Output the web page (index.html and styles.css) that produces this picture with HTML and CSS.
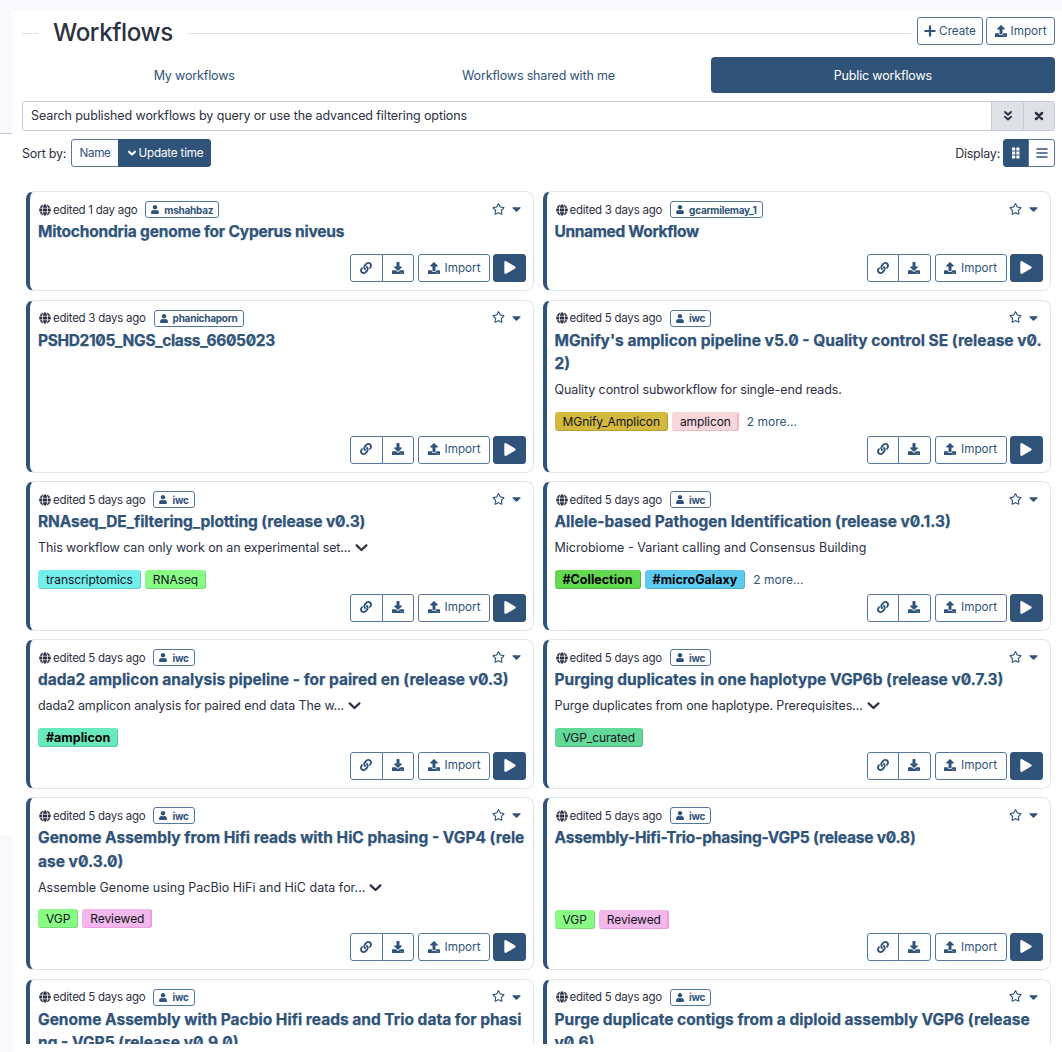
FILE: index.html
```html
<!DOCTYPE html>
<html lang="en">
<head>
<meta charset="utf-8">
<title>Workflows</title>
<link rel="stylesheet" href="styles.css">
</head>
<body>
<svg class="sprite" aria-hidden="true">
<symbol id="globe" viewBox="0 0 496 512"><path d="M336.500 160C322 70.700 287.800 8 248 8s-74 62.700-88.500 152h177zM152 256c0 22.200 1.200 43.500 3.300 64h185.300c2.100-20.500 3.300-41.800 3.300-64s-1.200-43.500-3.300-64H155.300c-2.100 20.500-3.300 41.800-3.300 64zm324.700-96c-28.600-67.900-86.500-120.400-158-141.600 24.400 33.800 41.200 84.700 50 141.600h108zM177.200 18.400C105.800 39.600 47.800 92.100 19.300 160h108c8.700-56.900 25.500-107.800 49.900-141.600zM487.400 192H372.700c2.100 21 3.300 42.500 3.300 64s-1.200 43-3.300 64h114.600c5.500-20.500 8.600-41.800 8.600-64s-3.100-43.500-8.500-64zM120 256c0-21.500 1.200-43 3.300-64H8.600C3.200 212.500 0 233.800 0 256s3.200 43.500 8.600 64h114.600c-2-21-3.200-42.500-3.200-64zm39.500 96c14.500 89.300 48.700 152 88.500 152s74-62.700 88.500-152h-177zm159.300 141.600c71.400-21.200 129.400-73.700 158-141.600h-108c-8.800 56.900-25.600 107.800-50 141.600zM19.300 352c28.600 67.900 86.500 120.400 158 141.600-24.400-33.800-41.200-84.700-50-141.600h-108z"/></symbol>
<symbol id="user" viewBox="0 0 448 512"><path d="M224 256c70.700 0 128-57.300 128-128S294.700 0 224 0 96 57.300 96 128s57.300 128 128 128zm89.600 32h-16.700c-22.200 10.200-46.900 16-72.900 16s-50.600-5.800-72.900-16h-16.700C60.200 288 0 348.200 0 422.400V464c0 26.500 21.500 48 48 48h352c26.500 0 48-21.500 48-48v-41.600c0-74.200-60.200-134.400-134.400-134.400z"/></symbol>
<symbol id="star" viewBox="0 0 576 512"><path d="M528.100 171.500L382 150.200 316.700 17.800c-11.700-23.600-45.600-23.900-57.400 0L194 150.200 47.900 171.500c-26.200 3.800-36.700 36.100-17.700 54.600l105.700 103-25 145.500c-4.500 26.300 23.200 46 46.400 33.700L288 439.600l130.700 68.700c23.200 12.200 50.900-7.400 46.400-33.700l-25-145.500 105.700-103c19-18.500 8.500-50.800-17.700-54.600zM388.600 312.300l23.700 138.400L288 385.400l-124.300 65.300 23.700-138.400-100.600-98 139-20.200 62.200-126 62.200 126 139 20.200-100.600 98z"/></symbol>
<symbol id="caret" viewBox="0 0 320 512"><path d="M31.300 192h257.300c17.800 0 26.700 21.500 14.100 34.100L174.100 354.800c-7.800 7.800-20.500 7.800-28.300 0L17.200 226.100C4.600 213.500 13.500 192 31.300 192z"/></symbol>
<symbol id="link" viewBox="0 0 512 512"><path d="M326.612 185.391c59.747 59.809 58.927 155.698.36 214.590-.11.12-.24.25-.36.37l-67.200 67.200c-59.270 59.270-155.699 59.262-214.960 0-59.270-59.260-59.270-155.700 0-214.960l37.106-37.106c9.840-9.840 26.786-3.300 27.294 10.606.648 17.722 3.826 35.527 9.690 52.721 1.986 5.822.567 12.262-3.783 16.612l-13.087 13.087c-28.026 28.026-28.905 73.660-1.155 101.960 28.024 28.579 74.086 28.749 102.325.51l67.200-67.190c28.191-28.191 28.073-73.757 0-101.830-3.701-3.694-7.429-6.564-10.341-8.569a16.037 16.037 0 0 1-6.947-12.606c-.396-10.567 3.348-21.456 11.698-29.806l21.054-21.055c5.521-5.521 14.182-6.199 20.584-1.731a152.482 152.482 0 0 1 20.522 17.197zM467.547 44.449c-59.261-59.262-155.690-59.270-214.960 0l-67.200 67.200c-.12.12-.25.25-.36.37-58.566 58.892-59.387 154.781.36 214.590a152.454 152.454 0 0 0 20.521 17.196c6.402 4.468 15.064 3.789 20.584-1.731l21.054-21.055c8.350-8.350 12.094-19.239 11.698-29.806a16.037 16.037 0 0 0-6.947-12.606c-2.912-2.005-6.640-4.875-10.341-8.569-28.073-28.073-28.191-73.639 0-101.830l67.200-67.190c28.239-28.239 74.300-28.069 102.325.51 27.750 28.300 26.872 73.934-1.155 101.960l-13.087 13.087c-4.350 4.350-5.769 10.790-3.783 16.612 5.864 17.194 9.042 34.999 9.690 52.721.509 13.906 17.454 20.446 27.294 10.606l37.106-37.106c59.271-59.259 59.271-155.699.001-214.959z"/></symbol>
<symbol id="download" viewBox="0 0 512 512"><path d="M216 0h80c13.300 0 24 10.700 24 24v168h87.700c17.800 0 26.700 21.500 14.100 34.100L269.700 378.300c-7.500 7.500-19.800 7.500-27.300 0L90.100 226.100c-12.600-12.600-3.700-34.100 14.100-34.100H192V24c0-13.300 10.700-24 24-24zm296 376v112c0 13.300-10.700 24-24 24H24c-13.300 0-24-10.700-24-24V376c0-13.300 10.700-24 24-24h146.700l49 49c20.100 20.100 52.500 20.100 72.600 0l49-49H488c13.300 0 24 10.700 24 24zm-124 88c0-11-9-20-20-20s-20 9-20 20 9 20 20 20 20-9 20-20zm64 0c0-11-9-20-20-20s-20 9-20 20 9 20 20 20 20-9 20-20z"/></symbol>
<symbol id="upload" viewBox="0 0 512 512"><path d="M296 384h-80c-13.300 0-24-10.700-24-24V192h-87.700c-17.800 0-26.700-21.500-14.100-34.100L242.300 5.700c7.500-7.500 19.800-7.500 27.300 0l152.200 152.200c12.600 12.600 3.700 34.100-14.100 34.100H320v168c0 13.300-10.700 24-24 24zm216-8v112c0 13.300-10.700 24-24 24H24c-13.300 0-24-10.700-24-24V376c0-13.300 10.700-24 24-24h136v8c0 30.900 25.100 56 56 56h80c30.900 0 56-25.100 56-56v-8h136c13.300 0 24 10.700 24 24zM388 464c0-11-9-20-20-20s-20 9-20 20 9 20 20 20 20-9 20-20zm64 0c0-11-9-20-20-20s-20 9-20 20 9 20 20 20 20-9 20-20z"/></symbol>
<symbol id="play" viewBox="0 0 448 512"><path d="M424.400 214.700L72.400 6.600C43.800-10.300 0 6.100 0 47.900V464c0 37.500 40.700 60.100 72.400 41.300l352-208c31.400-18.500 31.500-64.100 0-82.600z"/></symbol>
<symbol id="plus" viewBox="0 0 12 12"><path d="M6 1.300v9.400M1.300 6h9.400" fill="none" stroke="currentColor" stroke-width="2.200" stroke-linecap="round"/></symbol>
<symbol id="chevron" viewBox="0 0 12 12"><path d="M1.500 4l4.500 4.300L10.500 4" fill="none" stroke="currentColor" stroke-width="2.100" stroke-linecap="round" stroke-linejoin="round"/></symbol>
<symbol id="angle" viewBox="0 0 12 12"><path d="M3 4.700l3 2.900 3-2.900" fill="none" stroke="currentColor" stroke-width="2.100" stroke-linecap="round" stroke-linejoin="round"/></symbol>
<symbol id="double" viewBox="0 0 12 12"><path d="M3 2l3 2.700L9 2M3 6.800l3 2.700 3-2.700" fill="none" stroke="currentColor" stroke-width="1.900" stroke-linecap="round" stroke-linejoin="round"/></symbol>
<symbol id="cross" viewBox="0 0 12 12"><path d="M3 3l6 6M9 3l-6 6" fill="none" stroke="currentColor" stroke-width="2.500" stroke-linecap="round"/></symbol>
<symbol id="grid" viewBox="0 0 12 12"><path d="M2 .5h3.200v3H2zM6.300 .5h3.200v3H6.300zM2 4.500h3.200v3H2zM6.300 4.500h3.200v3H6.300zM2 8.500h3.200v3H2zM6.300 8.500h3.200v3H6.300z"/></symbol>
<symbol id="list" viewBox="0 0 12 12"><path d="M1 2h10M1 6h10M1 10h10" fill="none" stroke="currentColor" stroke-width="1.500" stroke-linecap="round"/></symbol>
</svg>
<div class="shell">
<aside class="rail"><div class="rail-top"></div><div class="rail-middle"></div><div class="rail-bottom"></div></aside>
<main class="main">
<header class="heading"><span class="rule rule-short"></span><h1>Workflows</h1><span class="rule"></span>
<div class="heading-actions"><button class="btn create"><svg class="icon"><use href="#plus"/></svg>Create</button><button class="btn upload"><svg class="icon"><use href="#upload"/></svg>Import</button></div></header>
<nav class="tabs"><a class="tab">My workflows</a><a class="tab">Workflows shared with me</a><a class="tab active">Public workflows</a></nav>
<div class="search"><div class="query">Search published workflows by query or use the advanced filtering options</div><button class="addon"><svg class="icon"><use href="#double"/></svg></button><button class="addon"><svg class="icon"><use href="#cross"/></svg></button></div>
<div class="toolbar"><span class="label">Sort by:</span><div class="group"><button class="btn name">Name</button><button class="btn solid update"><svg class="icon"><use href="#angle"/></svg>Update time</button></div>
<span class="label display">Display:</span><div class="group"><button class="btn solid view"><svg class="icon"><use href="#grid"/></svg></button><button class="btn view"><svg class="icon"><use href="#list"/></svg></button></div></div>

<section class="cards">
<article class="card">
<div class="meta"><svg class="icon globe"><use href="#globe"/></svg><span class="edited">edited 1 day ago</span><span class="owner"><svg class="icon"><use href="#user"/></svg>mshahbaz</span><svg class="icon star"><use href="#star"/></svg><svg class="icon caret"><use href="#caret"/></svg></div>
<h2 class="snug">Mitochondria genome for Cyperus niveus</h2>
<div class="actions"><div class="group"><button class="btn square"><svg class="icon"><use href="#link"/></svg></button><button class="btn square"><svg class="icon"><use href="#download"/></svg></button></div><button class="btn import"><svg class="icon"><use href="#upload"/></svg>Import</button><button class="btn solid run"><svg class="icon"><use href="#play"/></svg></button></div>
</article>
<article class="card">
<div class="meta"><svg class="icon globe"><use href="#globe"/></svg><span class="edited">edited 3 days ago</span><span class="owner"><svg class="icon"><use href="#user"/></svg>gcarmilemay_1</span><svg class="icon star"><use href="#star"/></svg><svg class="icon caret"><use href="#caret"/></svg></div>
<h2 class="tight">Unnamed Workflow</h2>
<div class="actions"><div class="group"><button class="btn square"><svg class="icon"><use href="#link"/></svg></button><button class="btn square"><svg class="icon"><use href="#download"/></svg></button></div><button class="btn import"><svg class="icon"><use href="#upload"/></svg>Import</button><button class="btn solid run"><svg class="icon"><use href="#play"/></svg></button></div>
</article>
<article class="card">
<div class="meta"><svg class="icon globe"><use href="#globe"/></svg><span class="edited">edited 3 days ago</span><span class="owner"><svg class="icon"><use href="#user"/></svg>phanichaporn</span><svg class="icon star"><use href="#star"/></svg><svg class="icon caret"><use href="#caret"/></svg></div>
<h2 class="tight">PSHD2105_NGS_class_6605023</h2>
<div class="actions"><div class="group"><button class="btn square"><svg class="icon"><use href="#link"/></svg></button><button class="btn square"><svg class="icon"><use href="#download"/></svg></button></div><button class="btn import"><svg class="icon"><use href="#upload"/></svg>Import</button><button class="btn solid run"><svg class="icon"><use href="#play"/></svg></button></div>
</article>
<article class="card">
<div class="meta"><svg class="icon globe"><use href="#globe"/></svg><span class="edited">edited 5 days ago</span><span class="owner"><svg class="icon"><use href="#user"/></svg>iwc</span><svg class="icon star"><use href="#star"/></svg><svg class="icon caret"><use href="#caret"/></svg></div>
<h2>MGnify's amplicon pipeline v5.0 - Quality control SE (release v0.<br>2)</h2>
<p>Quality control subworkflow for single-end reads.</p>
<div class="tags"><span class="tag gold">MGnify_Amplicon</span><span class="tag rose">amplicon</span><a class="more">2 more...</a></div>
<div class="actions"><div class="group"><button class="btn square"><svg class="icon"><use href="#link"/></svg></button><button class="btn square"><svg class="icon"><use href="#download"/></svg></button></div><button class="btn import"><svg class="icon"><use href="#upload"/></svg>Import</button><button class="btn solid run"><svg class="icon"><use href="#play"/></svg></button></div>
</article>
<article class="card">
<div class="meta"><svg class="icon globe"><use href="#globe"/></svg><span class="edited">edited 5 days ago</span><span class="owner"><svg class="icon"><use href="#user"/></svg>iwc</span><svg class="icon star"><use href="#star"/></svg><svg class="icon caret"><use href="#caret"/></svg></div>
<h2 class="close">RNAseq_DE_filtering_plotting (release v0.3)</h2>
<p>This workflow can only work on an experimental set... <svg class="icon expand"><use href="#chevron"/></svg></p>
<div class="tags"><span class="tag cyan">transcriptomics</span><span class="tag lime">RNAseq</span></div>
<div class="actions"><div class="group"><button class="btn square"><svg class="icon"><use href="#link"/></svg></button><button class="btn square"><svg class="icon"><use href="#download"/></svg></button></div><button class="btn import"><svg class="icon"><use href="#upload"/></svg>Import</button><button class="btn solid run"><svg class="icon"><use href="#play"/></svg></button></div>
</article>
<article class="card">
<div class="meta"><svg class="icon globe"><use href="#globe"/></svg><span class="edited">edited 5 days ago</span><span class="owner"><svg class="icon"><use href="#user"/></svg>iwc</span><svg class="icon star"><use href="#star"/></svg><svg class="icon caret"><use href="#caret"/></svg></div>
<h2>Allele-based Pathogen Identification (release v0.1.3)</h2>
<p class="even">Microbiome - Variant calling and Consensus Building</p>
<div class="tags"><span class="tag green named">#Collection</span><span class="tag sky named">#microGalaxy</span><a class="more">2 more...</a></div>
<div class="actions"><div class="group"><button class="btn square"><svg class="icon"><use href="#link"/></svg></button><button class="btn square"><svg class="icon"><use href="#download"/></svg></button></div><button class="btn import"><svg class="icon"><use href="#upload"/></svg>Import</button><button class="btn solid run"><svg class="icon"><use href="#play"/></svg></button></div>
</article>
<article class="card">
<div class="meta"><svg class="icon globe"><use href="#globe"/></svg><span class="edited">edited 5 days ago</span><span class="owner"><svg class="icon"><use href="#user"/></svg>iwc</span><svg class="icon star"><use href="#star"/></svg><svg class="icon caret"><use href="#caret"/></svg></div>
<h2>dada2 amplicon analysis pipeline - for paired en (release v0.3)</h2>
<p>dada2 amplicon analysis for paired end data The w... <svg class="icon expand"><use href="#chevron"/></svg></p>
<div class="tags"><span class="tag mint named">#amplicon</span></div>
<div class="actions"><div class="group"><button class="btn square"><svg class="icon"><use href="#link"/></svg></button><button class="btn square"><svg class="icon"><use href="#download"/></svg></button></div><button class="btn import"><svg class="icon"><use href="#upload"/></svg>Import</button><button class="btn solid run"><svg class="icon"><use href="#play"/></svg></button></div>
</article>
<article class="card">
<div class="meta"><svg class="icon globe"><use href="#globe"/></svg><span class="edited">edited 5 days ago</span><span class="owner"><svg class="icon"><use href="#user"/></svg>iwc</span><svg class="icon star"><use href="#star"/></svg><svg class="icon caret"><use href="#caret"/></svg></div>
<h2>Purging duplicates in one haplotype VGP6b (release v0.7.3)</h2>
<p>Purge duplicates from one haplotype. Prerequisites... <svg class="icon expand"><use href="#chevron"/></svg></p>
<div class="tags"><span class="tag jade">VGP_curated</span></div>
<div class="actions"><div class="group"><button class="btn square"><svg class="icon"><use href="#link"/></svg></button><button class="btn square"><svg class="icon"><use href="#download"/></svg></button></div><button class="btn import"><svg class="icon"><use href="#upload"/></svg>Import</button><button class="btn solid run"><svg class="icon"><use href="#play"/></svg></button></div>
</article>
<article class="card">
<div class="meta"><svg class="icon globe"><use href="#globe"/></svg><span class="edited">edited 5 days ago</span><span class="owner"><svg class="icon"><use href="#user"/></svg>iwc</span><svg class="icon star"><use href="#star"/></svg><svg class="icon caret"><use href="#caret"/></svg></div>
<h2>Genome Assembly from Hifi reads with HiC phasing - VGP4 (rele<br>ase v0.3.0)</h2>
<p class="even">Assemble Genome using PacBio HiFi and HiC data for... <svg class="icon expand"><use href="#chevron"/></svg></p>
<div class="tags"><span class="tag lime">VGP</span><span class="tag pink">Reviewed</span></div>
<div class="actions"><div class="group"><button class="btn square"><svg class="icon"><use href="#link"/></svg></button><button class="btn square"><svg class="icon"><use href="#download"/></svg></button></div><button class="btn import"><svg class="icon"><use href="#upload"/></svg>Import</button><button class="btn solid run"><svg class="icon"><use href="#play"/></svg></button></div>
</article>
<article class="card">
<div class="meta"><svg class="icon globe"><use href="#globe"/></svg><span class="edited">edited 5 days ago</span><span class="owner"><svg class="icon"><use href="#user"/></svg>iwc</span><svg class="icon star"><use href="#star"/></svg><svg class="icon caret"><use href="#caret"/></svg></div>
<h2 class="snug">Assembly-Hifi-Trio-phasing-VGP5 (release v0.8)</h2>
<div class="tags low"><span class="tag lime">VGP</span><span class="tag pink">Reviewed</span></div>
<div class="actions"><div class="group"><button class="btn square"><svg class="icon"><use href="#link"/></svg></button><button class="btn square"><svg class="icon"><use href="#download"/></svg></button></div><button class="btn import"><svg class="icon"><use href="#upload"/></svg>Import</button><button class="btn solid run"><svg class="icon"><use href="#play"/></svg></button></div>
</article>
<article class="card">
<div class="meta"><svg class="icon globe"><use href="#globe"/></svg><span class="edited">edited 5 days ago</span><span class="owner"><svg class="icon"><use href="#user"/></svg>iwc</span><svg class="icon star"><use href="#star"/></svg><svg class="icon caret"><use href="#caret"/></svg></div>
<h2>Genome Assembly with Pacbio Hifi reads and Trio data for phasi<br>ng - VGP5 (release v0.9.0)</h2>
</article>
<article class="card">
<div class="meta"><svg class="icon globe"><use href="#globe"/></svg><span class="edited">edited 5 days ago</span><span class="owner"><svg class="icon"><use href="#user"/></svg>iwc</span><svg class="icon star"><use href="#star"/></svg><svg class="icon caret"><use href="#caret"/></svg></div>
<h2>Purge duplicate contigs from a diploid assembly VGP6 (release<br>v0.6)</h2>
</article>
</section>
</main>
</div>
</body>
</html>
```
FILE: styles.css
```css
* { box-sizing: border-box; }
body {
  margin: 0;
  height: 1052px;
  overflow: hidden;
  background: #fff;
  color: #2c3143;
  font-family: Inter, "Liberation Sans", sans-serif;
  font-size: 12.500px;
  font-feature-settings: "zero";
}
.sprite { display: none; }
.icon { display: block; width: 12px; height: 12px; fill: currentColor; flex: none; }
.shell { display: flex; height: 1052px; padding-top: 10px; background: linear-gradient(#f8f9fc 10px, #fff 10px); }
.rail { display: flex; flex-direction: column; width: 12px; flex: none; }
.rail-top { height: 124px; background: #f8f9fc; border-bottom: 1px solid #c3c5c9; }
.rail-middle { height: 701px; }
.rail-bottom { flex: 1; background: #f8f9fc; }
.main { width: 1050px; height: 1034px; padding: 7px 7px 0 10px; overflow: hidden; }
button { font: inherit; margin: 0; }

.heading { display: flex; align-items: center; height: 32px; }
.heading h1 { margin: 0 16px 0 15px; width: 119px; font-size: 24.200px; line-height: 32px; font-weight: 500; letter-spacing: -.4px; white-space: nowrap; }
.rule { height: 1px; background: #dfe4e9; flex: 1; }
.rule-short { flex: none; width: 16px; }
.heading-actions { display: flex; gap: 3px; margin-left: 4px; align-self: flex-start; }
.btn {
  display: flex; align-items: center; justify-content: center; gap: 4px;
  height: 28px; padding: 0 0 1px; border: 1px solid #55779b; border-radius: 3px;
  background: #fff; color: #2f5379; font-size: 11.700px; white-space: nowrap;
}
.btn.solid { background: #2f5379; border-color: #2f5379; color: #fff; }
.create { width: 66px; gap: 3px; }
.upload { width: 69px; }

.tabs { display: grid; grid-template-columns: repeat(3, 1fr); height: 36px; margin-top: 8px; }
.tab { display: flex; align-items: center; justify-content: center; border-radius: 4px; color: #2f5379; letter-spacing: -.16px; }
.tab.active { background: #2f5379; color: #fff; }

.search { display: flex; height: 30px; margin-top: 8px; border: 1px solid #c3ccd6; border-radius: 3px; }
.query { flex: 1; padding-left: 8px; line-height: 28px; letter-spacing: -.1px; white-space: nowrap; }
.addon { display: flex; align-items: center; justify-content: center; width: 31px; padding: 0; border: 0; border-left: 1px solid #c3ccd6; background: #dee2e6; color: #2c3143; }
.addon:nth-child(2) { width: 32px; }

.toolbar { display: flex; align-items: center; height: 28px; margin-top: 8px; }
.label { width: 45px; margin-right: 4px; letter-spacing: -.25px; white-space: nowrap; }
.display { width: auto; margin-left: auto; margin-right: 3px; }
.group { display: flex; }
.group .btn:first-child { border-radius: 3px 0 0 3px; }
.group .btn:last-child { border-radius: 0 3px 3px 0; }
.group .btn + .btn { margin-left: -1px; }
.name { width: 48px; letter-spacing: -.3px; }
.update { width: 93px; gap: 1px; letter-spacing: -.2px; }
.view { width: 26px; }
.view + .view { width: 27px; }

.cards {
  display: grid; grid-template-columns: 508px 508px;
  grid-template-rows: 100px 173px 149.5px 149.5px 173px 173px;
  gap: 8.500px; margin-top: 24px; padding-left: 4px;
}
.card {
  display: flex; flex-direction: column; padding: 8px 8px 8px 8px;
  border: 1px solid #e1e4ea; border-left: 4px solid #2f5379; border-radius: 8px; background: #fff;
}
.meta { display: flex; align-items: center; height: 19px; flex: none; font-size: 11.500px; color: #2c3143; }
.globe { margin-left: 1px; }
.edited { margin-left: 2px; letter-spacing: -.26px; white-space: nowrap; }
.owner { display: flex; align-items: center; gap: 5px; height: 17px; margin-left: 8px; padding: 0 5px; border: 1px solid #55779b; border-radius: 3px; color: #2f5379; font-size: 10px; letter-spacing: -.25px; font-weight: 700; white-space: nowrap; }
.owner .icon { width: 8px; height: 9px; }
.star { width: 13px; margin: 0 0 2px auto; color: #2f5379; }
.caret { width: 9px; height: 14px; margin: 0 4px 1px 7px; color: #2f5379; }
.card h2 { margin: 1px 0 0; font-size: 15.500px; line-height: 23.500px; font-weight: 700; color: #2f5379; white-space: nowrap; -webkit-text-stroke: .25px #2f5379; }
.card h2.close { letter-spacing: -.1px; }
.card h2.snug { letter-spacing: -.2px; }
.card h2.tight { letter-spacing: -.34px; }
.card p { display: flex; align-items: center; gap: 4px; height: 20px; margin: 4px 0 0; letter-spacing: -.1px; white-space: nowrap; }
.card p.even { letter-spacing: 0; }
.expand { width: 13px; height: 13px; }
.tags { display: flex; align-items: center; height: 19px; gap: 4px; margin-top: 12px; }
.tags.low { margin-top: 60px; }
.tag { height: 19px; padding: 0 8px; line-height: 19px; border-radius: 3px; color: #10131c; font-size: 12px; letter-spacing: -.08px; white-space: nowrap; box-shadow: inset -1px -1px #0002; }
.tag.named { font-size: 12.500px; letter-spacing: 0; font-weight: 700; color: #000; }
.gold { background: #d3b93e; }
.rose { background: #f8d7dc; box-shadow: inset -2px -1px #f7b9c1; }
.cyan { background: #72eeeb; }
.lime { background: #88fc85; }
.green { background: #63d851; }
.sky { background: #5dcaf0; }
.mint { background: #68eabd; }
.jade { background: #62d899; }
.pink { background: #f3b9ea; box-shadow: inset -2px -1px #f39be5; }
.more { margin-left: 4px; color: #2f5379; font-size: 12px; }
.actions { display: flex; justify-content: flex-end; gap: 4px; margin-top: auto; margin-right: -1px; }
.square { width: 32.500px; }
.import { width: 72px; gap: 5px; }
.run { width: 33px; margin-left: -1px; }
.run .icon { width: 12px; height: 13px; }
```
